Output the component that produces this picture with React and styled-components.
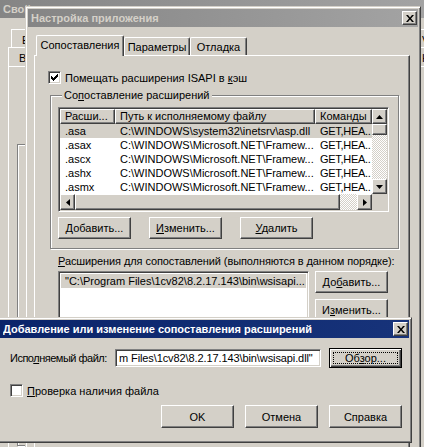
import React from "react";
import styled, { createGlobalStyle, css } from "styled-components";

const FACE = "#d4d0c8";

const GlobalStyle = createGlobalStyle`
  html, body {
    margin: 0;
    padding: 0;
    background: ${FACE};
  }
  body {
    font-family: "Liberation Sans", Arial, sans-serif;
    font-size: 11px;
    color: #000;
  }
`;

// classic 3D edges
const raisedEdge = css`
  border: 1px solid;
  border-color: #fff #404040 #404040 #fff;
  box-shadow: inset -1px -1px #808080;
`;

const sunkenEdge = css`
  border: 1px solid;
  border-color: #808080 #fff #fff #808080;
  box-shadow: inset 1px 1px #404040, inset -1px -1px ${FACE};
`;

const dither = css`
  background-color: #fff;
  background-image: repeating-conic-gradient(${FACE} 0% 25%, #fff 0% 50%);
  background-size: 2px 2px;
`;

// DESKTOP + WINDOWS
const Desktop = styled.div`
  position: relative;
  width: 424px;
  height: 447px;
  overflow: hidden;
  background: ${FACE};
`;

const Window = styled.div`
  position: absolute;
  left: ${p => p.$left}px;
  top: ${p => p.$top}px;
  width: ${p => p.$width}px;
  height: ${p => (p.$height ? `${p.$height}px` : "auto")};
  box-sizing: border-box;
  display: flex;
  flex-direction: column;
  padding: 2px;
  background: ${FACE};
  border: 1px solid;
  border-color: ${FACE} #404040 #404040 ${FACE};
  box-shadow: inset 1px 1px #fff, inset -1px -1px #808080;
`;

const TitleBar = styled.div`
  flex: none;
  height: 18px;
  display: flex;
  align-items: center;
  padding: 0 1px 0 3px;
  background: ${p =>
    p.$active
      ? "linear-gradient(90deg, #0a246a, #17337a)"
      : "linear-gradient(90deg, #858585, #a3a3a3)"};
  color: ${p => (p.$active ? "#fff" : FACE)};
  font-weight: bold;
  white-space: nowrap;
  overflow: hidden;
`;

const TitleText = styled.span`
  flex: 1;
  overflow: hidden;
`;

const CloseBox = styled.div`
  flex: none;
  box-sizing: border-box;
  width: 15px;
  height: 14px;
  display: flex;
  align-items: center;
  justify-content: center;
  background: ${FACE};
  ${raisedEdge}
`;

const Key = styled.span`
  text-decoration: underline;
  text-underline-offset: 1px;
`;

// BACK WINDOW
const BackBody = styled.div`
  flex: 1;
  display: flex;
  flex-direction: column;
  padding-top: 11px;
`;

const BackTabRow = styled.div`
  display: flex;
  justify-content: space-between;
  align-items: stretch;
  height: ${p => p.$h}px;
  padding-left: ${p => p.$indent}px;
`;

const BackTab = styled.div`
  box-sizing: border-box;
  width: ${p => p.$w}px;
  padding: 4px 0 0 ${p => p.$pad}px;
  margin-right: ${p => p.$mr || 0}px;
  border: 1px solid;
  border-color: #fff #404040 transparent #fff;
  border-bottom: 0;
  box-shadow: inset -1px 0 #808080;
  line-height: 13px;
  overflow: hidden;
`;

const BackPanel = styled.div`
  flex: 1;
  margin: -1px 0 0 8px;
  padding: 77px 0 0 8px;
  ${raisedEdge}
`;

const BackGroup = styled.div`
  width: 60px;
  height: 300px;
  border: 1px solid #808080;
  box-shadow: inset 1px 1px #fff, 1px 1px #fff;
`;

// MIDDLE WINDOW
const MidBody = styled.div`
  flex: 1;
  display: flex;
  flex-direction: column;
  padding: 8px 8px 0 6px;
`;

const TabStrip = styled.div`
  position: relative;
  z-index: 1;
  display: flex;
  align-items: flex-start;
  height: 21px;
  margin-bottom: -1px;
  padding-left: 2px;
`;

const Tab = styled.div`
  box-sizing: border-box;
  width: ${p => p.$w}px;
  height: ${p => (p.$active ? 21 : 18)}px;
  margin-top: ${p => (p.$active ? 0 : 2)}px;
  padding-bottom: ${p => (p.$active ? 2 : 0)}px;
  display: flex;
  align-items: center;
  justify-content: center;
  background: ${FACE};
  border: 1px solid;
  border-color: #fff #404040 transparent #fff;
  border-bottom: 0;
  border-radius: 2px 2px 0 0;
  box-shadow: inset -1px 0 #808080;
`;

const TabPanel = styled.div`
  flex: 1;
  display: flex;
  flex-direction: column;
  padding: 15px 10px 0 13px;
  ${raisedEdge}
`;

const CheckRow = styled.div`
  display: flex;
  align-items: center;
  gap: 4px;
  height: 13px;
  margin-top: ${p => p.$mt || 0}px;
`;

const CheckBox = styled.div`
  flex: none;
  box-sizing: border-box;
  width: 13px;
  height: 13px;
  display: flex;
  align-items: center;
  justify-content: center;
  background: #fff;
  ${sunkenEdge}
`;

const GroupBox = styled.fieldset`
  margin: 5px 0 0 2px;
  padding: 5px 9px 9px 7px;
  min-width: 0;
  border: 1px solid #808080;
  box-shadow: inset 1px 1px #fff, 1px 1px #fff;
`;

const Legend = styled.legend`
  margin-left: 4px;
  padding: 0 2px;
  line-height: 13px;
  background: ${FACE};
`;

const ListView = styled.div`
  box-sizing: border-box;
  width: 331px;
  height: 105px;
  padding: 1px;
  display: grid;
  grid-template-columns: 312px 15px;
  grid-template-rows: 85px 16px;
  background: #fff;
  ${sunkenEdge}
`;

const ListBody = styled.div`
  overflow: hidden;
`;

const ListRow = styled.div`
  display: grid;
  grid-template-columns: 55px 200px 57px;
  height: ${p => (p.$header ? 15 : 14)}px;
  line-height: ${p => (p.$header ? 13 : 14)}px;
  background: ${p => (p.$selected ? FACE : "transparent")};
  white-space: nowrap;
`;

const HeadCell = styled.div`
  box-sizing: border-box;
  padding-left: 4px;
  background: ${FACE};
  overflow: hidden;
  ${raisedEdge}
`;

const Cell = styled.div`
  padding-left: ${p => p.$pad || 5}px;
  letter-spacing: ${p => (p.$tight ? "-0.3px" : "normal")};
  overflow: hidden;
`;

const ScrollBar = styled.div`
  display: flex;
  flex-direction: ${p => (p.$vertical ? "column" : "row")};
  ${dither}
`;

const ScrollButton = styled.div`
  flex: none;
  box-sizing: border-box;
  width: ${p => p.$w || 15}px;
  height: ${p => p.$h || 15}px;
  display: flex;
  align-items: center;
  justify-content: center;
  background: ${FACE};
  ${raisedEdge}
`;

const ScrollTrack = styled.div`
  flex: 1;
`;

const Corner = styled.div`
  background: ${FACE};
`;

const Button = styled.div`
  position: relative;
  flex: none;
  box-sizing: border-box;
  width: ${p => p.$w || 73}px;
  height: ${p => p.$h || 22}px;
  display: flex;
  align-items: center;
  justify-content: center;
  background: ${FACE};
  white-space: nowrap;
  ${raisedEdge}
  ${p =>
    p.$default &&
    css`
      border-color: #000;
      box-shadow: inset 1px 1px #fff, inset -1px -1px #404040, inset -2px -2px #808080;
      &::after {
        content: "";
        position: absolute;
        inset: 3px;
        border: 1px dotted #000;
      }
    `}
`;

const ButtonRow = styled.div`
  display: flex;
  gap: ${p => p.$gap}px;
  margin-top: ${p => p.$mt}px;
  justify-content: ${p => (p.$end ? "flex-end" : "flex-start")};
`;

const SubLabel = styled.div`
  margin: 6px 0 0 10px;
  line-height: 13px;
  white-space: nowrap;
  letter-spacing: -0.1px;
`;

const OrderRow = styled.div`
  display: flex;
  gap: 6px;
  margin: 3px 0 0 10px;
`;

const OrderList = styled.div`
  box-sizing: border-box;
  width: 251px;
  height: 90px;
  padding: 2px 2px;
  background: #fff;
  overflow: hidden;
  ${sunkenEdge}
`;

const OrderItem = styled.div`
  height: 14px;
  line-height: 14px;
  padding-left: 4px;
  background: ${FACE};
  white-space: nowrap;
  overflow: hidden;
`;

const SideButtons = styled.div`
  display: flex;
  flex-direction: column;
  gap: 6px;
`;

// FRONT DIALOG
const DialogBody = styled.div`
  display: flex;
  flex-direction: column;
  padding: 10px 7px 12px 10px;
`;

const FileRow = styled.div`
  display: flex;
  align-items: center;
  height: 20px;
`;

const FileLabel = styled.div`
  width: 105px;
  flex: none;
  white-space: nowrap;
  letter-spacing: -0.5px;
`;

const TextField = styled.div`
  flex: 1;
  min-width: 0;
  box-sizing: border-box;
  height: 18px;
  margin-right: 8px;
  padding: 0 3px;
  display: flex;
  align-items: center;
  overflow: hidden;
  white-space: nowrap;
  letter-spacing: -0.1px;
  background: #fff;
  ${sunkenEdge}
`;

// ICONS
const CloseGlyph = () => (
  <svg width="8" height="7" viewBox="0 0 8 7">
    <path d="M0 0h2l2 2.4L6 0h2L5 3.5 8 7H6L4 4.6 2 7H0l3-3.5z" fill="#000" />
  </svg>
);

const CheckGlyph = () => (
  <svg width="7" height="7" viewBox="0 0 7 7" shapeRendering="crispEdges">
    <path d="M0 2h1v1h1v1h1V3h1V2h1V1h1V0h1v3H6v1H5v1H4v1H3v1H2V6H1V5H0z" fill="#000" />
  </svg>
);

const Arrow = ({ dir }) => {
  const pts = {
    up: "3.5,0 7,4 0,4",
    down: "0,0 7,0 3.5,4",
    left: "4,0 4,7 0,3.5",
    right: "0,0 0,7 4,3.5",
  };
  const horiz = dir === "left" || dir === "right";
  const w = horiz ? 4 : 7;
  const h = horiz ? 7 : 4;
  return (
    <svg width={w} height={h} viewBox={`0 0 ${w} ${h}`}>
      <polygon points={pts[dir]} fill="#000" />
    </svg>
  );
};

const mappings = [
  [".asa", "C:\\WINDOWS\\system32\\inetsrv\\asp.dll", "GET,HEA.."],
  [".asax", "C:\\WINDOWS\\Microsoft.NET\\Framew...", "GET,HEA.."],
  [".ascx", "C:\\WINDOWS\\Microsoft.NET\\Framew...", "GET,HEA.."],
  [".ashx", "C:\\WINDOWS\\Microsoft.NET\\Framew...", "GET,HEA.."],
  [".asmx", "C:\\WINDOWS\\Microsoft.NET\\Framew...", "GET,HEA.."],
];

const App = () => (
  <>
    <GlobalStyle />
    <Desktop>
      {/* back properties window */}
      <Window $left={-3} $top={-3} $width={432} $height={470}>
        <TitleBar>
          <TitleText>Свойства</TitleText>
        </TitleBar>
        <BackBody>
          <BackTabRow $h={18} $indent={11}>
            <BackTab $w={80} $pad={10}>Е</BackTab>
            <BackTab $w={30} $pad={6} $mr={-19}>V</BackTab>
          </BackTabRow>
          <BackTabRow $h={20} $indent={8}>
            <BackTab $w={80} $pad={10}>В</BackTab>
            <BackTab $w={30} $pad={6} $mr={-19}>Н</BackTab>
          </BackTabRow>
          <BackPanel>
            <BackGroup />
          </BackPanel>
        </BackBody>
      </Window>

      {/* application settings window */}
      <Window $left={25} $top={6} $width={396} $height={470}>
        <TitleBar>
          <TitleText>Настройка приложения</TitleText>
          <CloseBox>
            <CloseGlyph />
          </CloseBox>
        </TitleBar>
        <MidBody>
          <TabStrip>
            <Tab $w={88} $active>Сопоставления</Tab>
            <Tab $w={66}>Параметры</Tab>
            <Tab $w={57}>Отладка</Tab>
          </TabStrip>
          <TabPanel>
            <CheckRow>
              <CheckBox>
                <CheckGlyph />
              </CheckBox>
              <span>
                Помещать расширения ISAPI в <Key>к</Key>эш
              </span>
            </CheckRow>
            <GroupBox>
              <Legend>
                Со<Key>п</Key>оставление расширений
              </Legend>
              <ListView>
                <ListBody>
                  <ListRow $header>
                    <HeadCell>Расши...</HeadCell>
                    <HeadCell>Путь к исполняемому файлу</HeadCell>
                    <HeadCell>Команды</HeadCell>
                  </ListRow>
                  {mappings.map(([ext, path, verbs], i) => (
                    <ListRow key={ext} $selected={i === 0}>
                      <Cell>{ext}</Cell>
                      <Cell>{path}</Cell>
                      <Cell $pad={5} $tight>
                        {verbs}
                      </Cell>
                    </ListRow>
                  ))}
                </ListBody>
                <ScrollBar $vertical>
                  <ScrollButton>
                    <Arrow dir="up" />
                  </ScrollButton>
                  <ScrollButton $h={11} />
                  <ScrollTrack />
                  <ScrollButton>
                    <Arrow dir="down" />
                  </ScrollButton>
                </ScrollBar>
                <ScrollBar>
                  <ScrollButton $h={16}>
                    <Arrow dir="left" />
                  </ScrollButton>
                  <ScrollButton $w={265} $h={16} />
                  <ScrollTrack />
                  <ScrollButton $h={16}>
                    <Arrow dir="right" />
                  </ScrollButton>
                </ScrollBar>
                <Corner />
              </ListView>
              <ButtonRow $gap={18} $mt={5}>
                <Button>
                  <span>
                    <Key>Д</Key>обавить...
                  </span>
                </Button>
                <Button>
                  <span>
                    <Key>И</Key>зменить...
                  </span>
                </Button>
                <Button>
                  <span>
                    <Key>У</Key>далить
                  </span>
                </Button>
              </ButtonRow>
            </GroupBox>
            <SubLabel>
              <Key>Р</Key>асширения для сопоставлений (выполняются в данном порядке):
            </SubLabel>
            <OrderRow>
              <OrderList>
                <OrderItem>"C:\Program Files\1cv82\8.2.17.143\bin\wsisapi...</OrderItem>
              </OrderList>
              <SideButtons>
                <Button>
                  <span>
                    До<Key>б</Key>авить...
                  </span>
                </Button>
                <Button>
                  <span>
                    И<Key>з</Key>менить...
                  </span>
                </Button>
              </SideButtons>
            </OrderRow>
          </TabPanel>
        </MidBody>
      </Window>

      {/* add / edit mapping dialog */}
      <Window $left={-3} $top={317} $width={415}>
        <TitleBar $active>
          <TitleText>Добавление или изменение сопоставления расширений</TitleText>
          <CloseBox>
            <CloseGlyph />
          </CloseBox>
        </TitleBar>
        <DialogBody>
          <FileRow>
            <FileLabel>
              Испо<Key>л</Key>няемый файл:
            </FileLabel>
            <TextField>m Files\1cv82\8.2.17.143\bin\wsisapi.dll"</TextField>
            <Button $h={20} $default>
              <span>
                Об<Key>з</Key>ор...
              </span>
            </Button>
          </FileRow>
          <CheckRow $mt={16}>
            <CheckBox />
            <span>
              <Key>П</Key>роверка наличия файла
            </span>
          </CheckRow>
          <ButtonRow $gap={11} $mt={8} $end>
            <Button $h={23}>OK</Button>
            <Button $h={23}>Отмена</Button>
            <Button $h={23}>Справка</Button>
          </ButtonRow>
        </DialogBody>
      </Window>
    </Desktop>
  </>
);

export default App;
